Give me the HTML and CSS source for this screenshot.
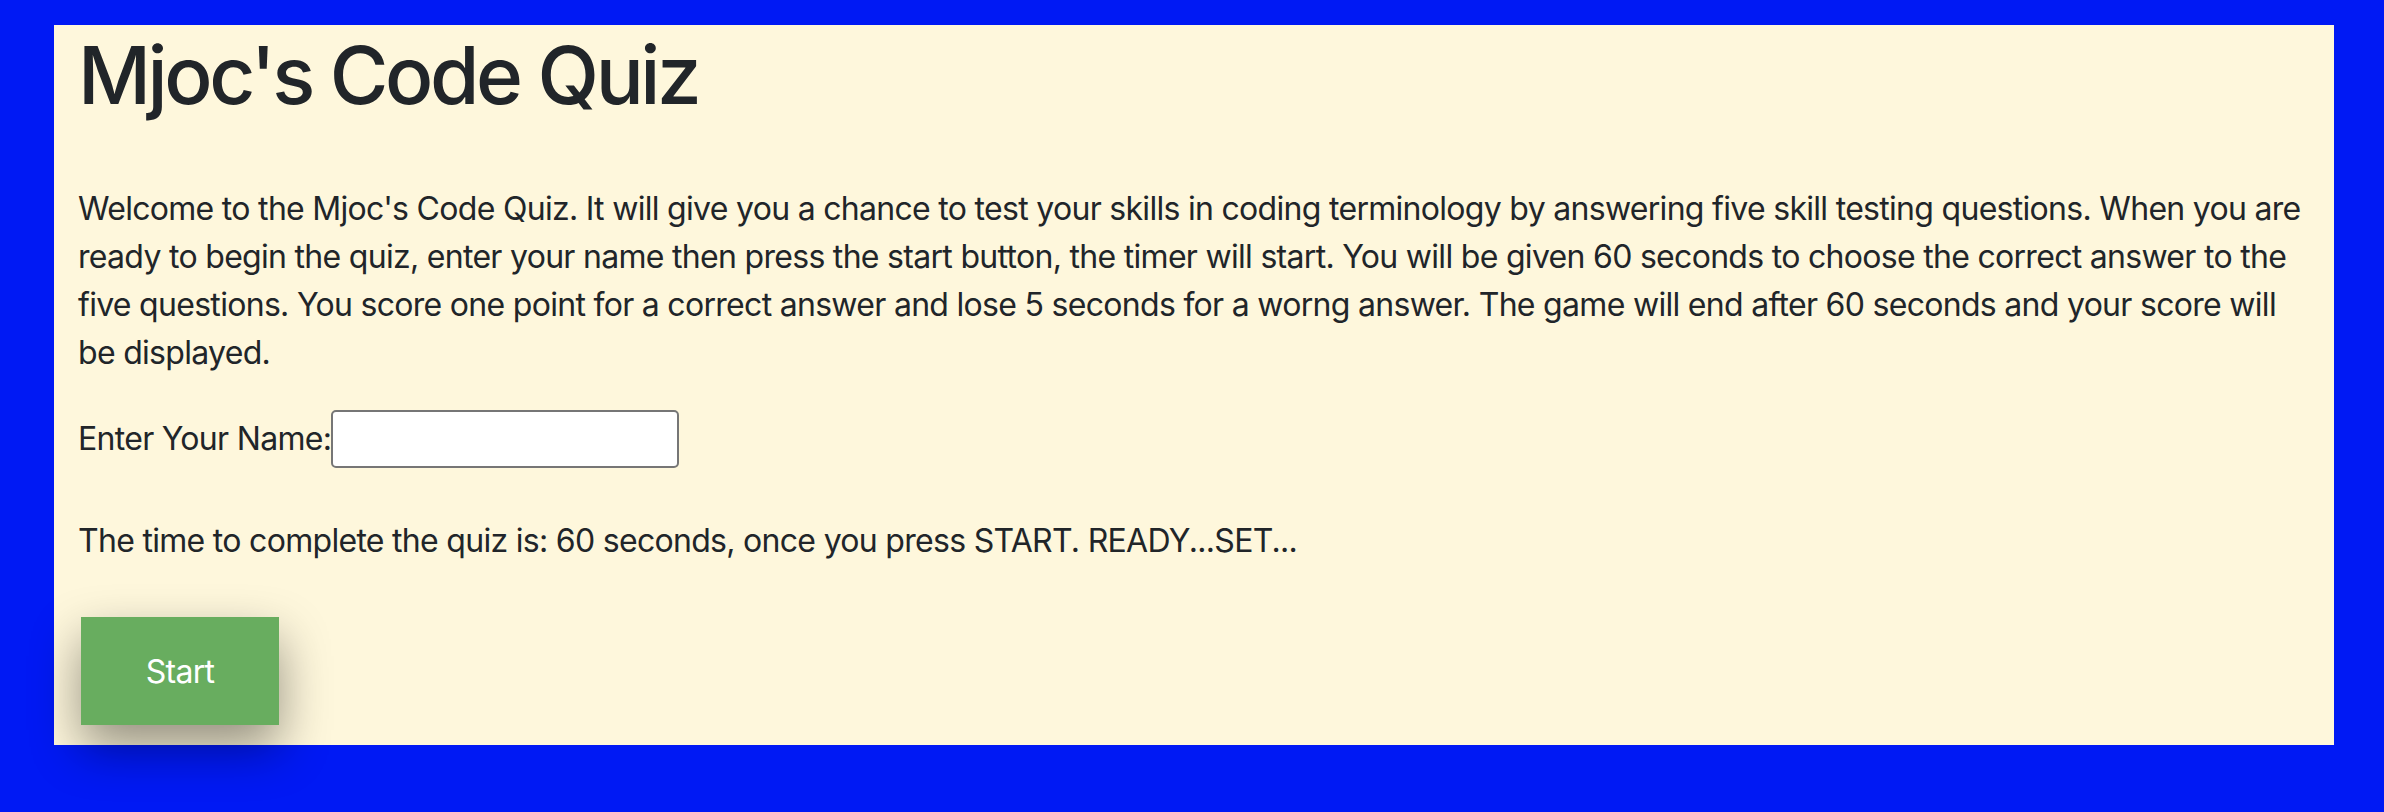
FILE: index.html
```html
<!DOCTYPE html>
<html lang="en">
<head>
<meta charset="utf-8">
<title>Mjoc's Code Quiz</title>
<link rel="stylesheet" href="styles.css">
</head>
<body>
<main class="quiz">
  <h1 class="quiz-title">Mjoc's Code Quiz</h1>
  <p class="intro">Welcome to the Mjoc's Code Quiz. It will give you a chance to test your skills in coding terminology by answering five skill testing questions. When you are ready to begin the quiz, enter your name then press the start button, the timer will start. You will be given 60 seconds to choose the correct answer to the five questions. You score one point for a correct answer and lose 5 seconds for a worng answer. The game will end after 60 seconds and your score will be displayed.</p>
  <div class="name-row">
    <label class="name-label" for="name">Enter Your Name:</label>
    <input class="name-input" id="name" type="text">
  </div>
  <p class="timer">The time to complete the quiz is: 60 seconds, once you press START. READY...SET...</p>
  <button class="start-btn" type="button">Start</button>
</main>
</body>
</html>
```
FILE: styles.css
```css
html, body {
  margin: 0;
  padding: 0;
}

body {
  background: #0019f4;
  padding: 25px 50px 67px 54px;
  font-family: Inter, "Noto Sans", sans-serif;
  color: #212529;
  letter-spacing: -0.7px;
}

.quiz {
  background: #fef7dc;
  height: 720px;
  box-sizing: border-box;
  padding: 2px 24px 0 24px;
}

.quiz-title {
  margin: 0 0 62px 0;
  font-size: 80px;
  line-height: 1.2;
  font-weight: 500;
  letter-spacing: -3.4px;
}

.intro {
  margin: 0 0 33px 0;
  font-size: 32px;
  line-height: 48px;
}

.name-row {
  display: flex;
  align-items: center;
  height: 58px;
  margin-bottom: 49px;
}

.name-label {
  font-size: 32px;
  line-height: 48px;
}

.name-input {
  box-sizing: border-box;
  width: 348px;
  height: 58px;
  margin: 0;
  border: 2px solid #767676;
  border-radius: 5px;
  background: #fff;
}

.timer {
  margin: 0 0 52px 0;
  font-size: 32px;
  line-height: 48px;
}

.start-btn {
  display: block;
  margin-left: 3px;
  width: 198px;
  height: 108px;
  border: none;
  background: #68ad5f;
  color: #fff;
  font-family: Inter, "Noto Sans", sans-serif;
  font-size: 32px;
  letter-spacing: -0.7px;
  box-shadow: 0 22px 50px rgba(0, 0, 0, 0.42);
}
```
